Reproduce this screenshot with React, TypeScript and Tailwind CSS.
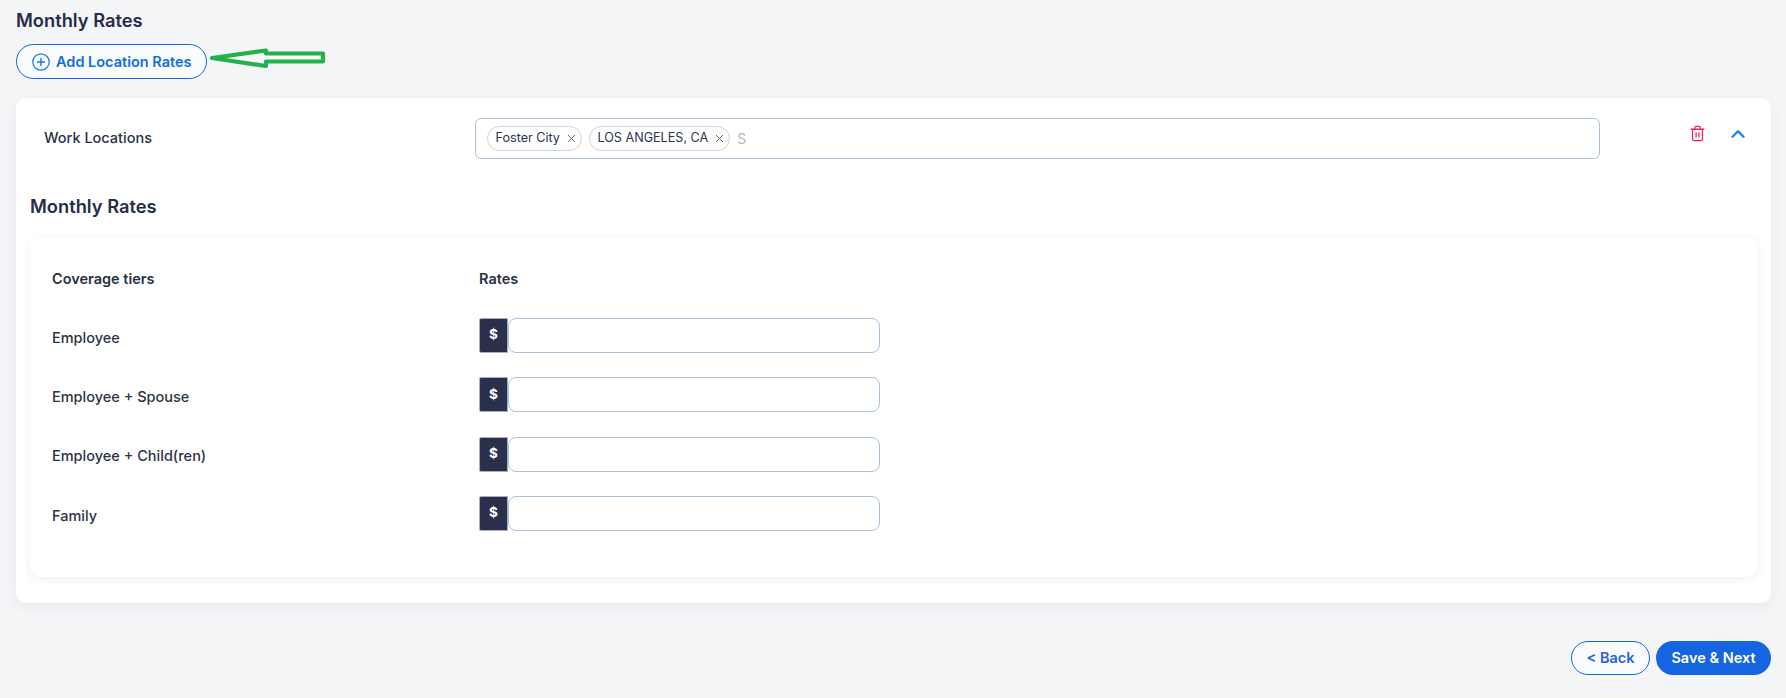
import React from 'react';
import { X, Trash2, ChevronUp } from 'lucide-react';

const tiers = ['Employee', 'Employee + Spouse', 'Employee + Child(ren)', 'Family'];

const Chip = ({ label }: { label: string }) => (
  <span className="flex items-center h-[25px] pl-[7.5px] pr-[3px] rounded-full border border-[#d0d3d8] text-[12.6px] text-[#2b3350] whitespace-nowrap">
    {label}
    <X className="w-[13px] h-[13px] ml-[5px] text-[#5f6672]" strokeWidth={1.8} />
  </span>
);

export default function App() {
  return (
    <div className="min-h-[698px] bg-[#f4f5f7] pl-4 pr-[15px] pt-[8px] font-['Inter',sans-serif] text-[#262d48]">
      <h1 className="text-[18.3px] leading-[24px] font-semibold">Monthly Rates</h1>

      <div className="flex items-center mt-[12px]">
        <button className="flex items-center w-[191px] h-[35px] pl-[15px] rounded-full border border-[#1565e0] bg-[#fafbfd] text-[14.5px] font-semibold text-[#0f6fd8]">
          <svg viewBox="0 0 18 18" className="w-[18px] h-[18px] mr-[6px]" fill="none" stroke="#1b7fe8" strokeWidth="1.3">
            <circle cx="9" cy="9" r="8.2" />
            <path d="M9 5v8M5 9h8" strokeWidth="1.5" />
          </svg>
          Add Location Rates
        </button>
        <svg viewBox="0 0 118 24" className="w-[118px] h-6 ml-[2px] -mt-[6px]">
          <path d="M3 11 L57 3.500 V6.500 H114 V14.500 H57 V19 Z" fill="#f7f8fa" stroke="#22b14c" strokeWidth="4.2" strokeLinejoin="round" />
        </svg>
      </div>

      <div className="mt-[19px] h-[505px] rounded-[10px] bg-white shadow-[0_4px_14px_rgba(30,40,80,0.05)] pt-5 px-[14px]">
        <div className="flex items-center h-[41px]">
          <span className="w-[445px] pl-[14px] -mt-[2px] text-[14.5px] font-[450] text-[#28324a]">Work Locations</span>
          <div className="flex items-center gap-[7px] w-[1125px] h-[41px] pl-[11px] rounded-[6px] border border-[#a9c3da]">
            <Chip label="Foster City" />
            <Chip label="LOS ANGELES, CA" />
            <span className="text-[14px] text-[#b5b8bd]">S</span>
          </div>
          <div className="flex items-center -mt-[10px]">
            <Trash2 className="w-[17px] h-[17px] ml-[89px] text-[#e8285a]" strokeWidth={1.8} />
            <ChevronUp className="w-[22px] h-[22px] ml-[21px] text-[#1583f0]" strokeWidth={2.6} />
          </div>
        </div>

        <h2 className="text-[18.3px] leading-[24px] font-semibold mt-[35px]">Monthly Rates</h2>

        <div className="mt-[19px] h-[340px] rounded-[10px] bg-white shadow-[0_2px_10px_rgba(30,40,80,0.07)] pl-[22px] pt-[32px]">
          <div className="grid grid-cols-[427px_1fr] items-center text-[14.5px] font-semibold text-[#28323f] leading-5">
            <span>Coverage tiers</span>
            <span>Rates</span>
          </div>
          <div className="mt-[29px] flex flex-col gap-[24.3px]">
            {tiers.map(tier => (
              <div key={tier} className="grid grid-cols-[427px_1fr] items-center h-[35px]">
                <span className="pt-1 text-[14.5px] font-[450] text-[#2b3445]">{tier}</span>
                <div className="flex h-[35px]">
                  <div className="flex items-center justify-center w-[29px] pb-[2px] rounded-l-[2px] border border-[#a9b0bd] bg-[#2a304b] text-[13.5px] font-bold text-white">$</div>
                  <input className="w-[372px] rounded-[8px] border border-[#a9c3da] bg-white outline-none" />
                </div>
              </div>
            ))}
          </div>
        </div>
      </div>

      <div className="flex justify-end gap-[6px] mt-[38px]">
        <button className="w-[79px] h-[34px] rounded-full border border-[#1565e0] bg-[#fafbfd] text-[14.5px] font-semibold text-[#2563d8]">&lt; Back</button>
        <button className="w-[115px] h-[34px] rounded-full bg-[#1565e0] text-[14.5px] font-semibold text-white">Save &amp; Next</button>
      </div>
    </div>
  );
}
